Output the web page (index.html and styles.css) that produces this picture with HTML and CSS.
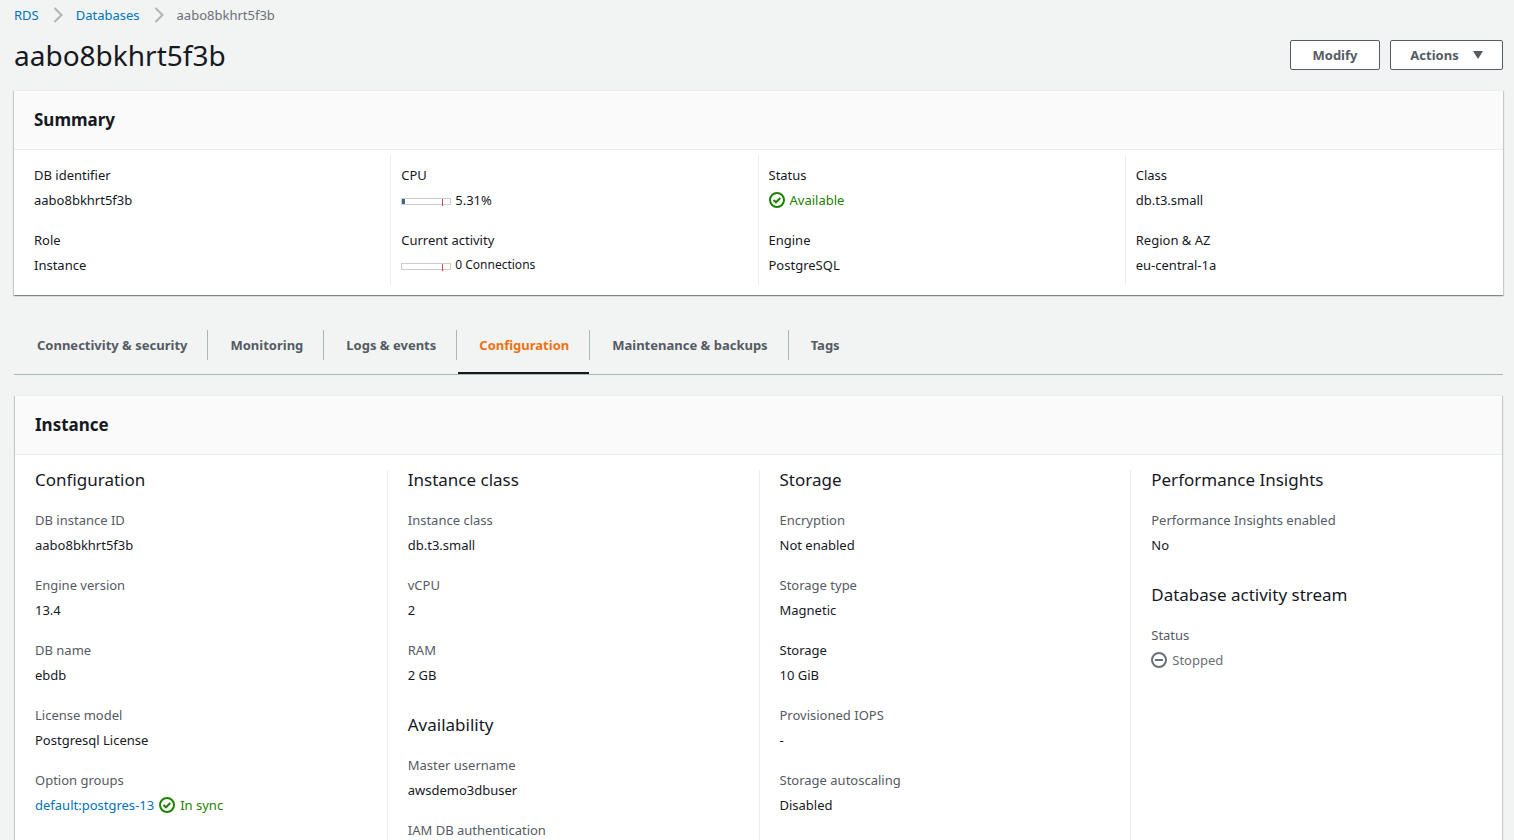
FILE: index.html
```html
<!DOCTYPE html>
<html lang="en">
<head>
<meta charset="utf-8">
<title>RDS - aabo8bkhrt5f3b</title>
<link rel="stylesheet" href="styles.css">
</head>
<body>
<svg class="sprite" aria-hidden="true">
  <symbol id="ok" viewBox="0 0 16 16"><circle cx="8" cy="8" r="7" fill="none" stroke="currentColor" stroke-width="2"/><path d="M4.500 8 7 10.300l4.300-4.300" fill="none" stroke="currentColor" stroke-width="2"/></symbol>
  <symbol id="stopped" viewBox="0 0 16 16"><circle cx="8" cy="8" r="7" fill="none" stroke="currentColor" stroke-width="2"/><path d="M4 8h8" fill="none" stroke="currentColor" stroke-width="2"/></symbol>
  <symbol id="chevron" viewBox="0 0 10 16"><path d="M1.500 1 8.500 8l-7 7" fill="none" stroke="currentColor" stroke-width="2"/></symbol>
</svg>
<main class="page">
  <nav class="breadcrumb" aria-label="Breadcrumb">
    <a href="#">RDS</a>
    <svg class="chevron"><use href="#chevron"/></svg>
    <a href="#">Databases</a>
    <svg class="chevron"><use href="#chevron"/></svg>
    <span class="muted">aabo8bkhrt5f3b</span>
  </nav>
  <header class="title-bar">
    <h1>aabo8bkhrt5f3b</h1>
    <div class="buttons">
      <button class="button" type="button">Modify</button>
      <button class="button button-menu" type="button">Actions <svg class="caret" viewBox="0 0 10 8"><path d="M0 0h10L5 8z" fill="currentColor"/></svg></button>
    </div>
  </header>

  <section class="panel">
    <h2>Summary</h2>
    <div class="summary">
      <dl>
        <div><dt>DB identifier</dt><dd>aabo8bkhrt5f3b</dd></div>
        <div><dt>Role</dt><dd>Instance</dd></div>
      </dl>
      <dl>
        <div><dt>CPU</dt><dd class="metric"><span class="gauge"><span class="gauge-fill"></span></span>5.31%</dd></div>
        <div><dt>Current activity</dt><dd class="metric metric-small"><span class="gauge"></span>0 Connections</dd></div>
      </dl>
      <dl>
        <div><dt>Status</dt><dd class="status ok"><svg class="icon"><use href="#ok"/></svg>Available</dd></div>
        <div><dt>Engine</dt><dd>PostgreSQL</dd></div>
      </dl>
      <dl>
        <div><dt>Class</dt><dd>db.t3.small</dd></div>
        <div><dt>Region &amp; AZ</dt><dd>eu-central-1a</dd></div>
      </dl>
    </div>
  </section>

  <nav class="tabs" aria-label="Database details">
    <a href="#"><span>Connectivity &amp; security</span></a>
    <a href="#"><span>Monitoring</span></a>
    <a href="#"><span>Logs &amp; events</span></a>
    <a href="#" class="active" aria-current="page"><span>Configuration</span></a>
    <a href="#"><span>Maintenance &amp; backups</span></a>
    <a href="#"><span>Tags</span></a>
  </nav>

  <section class="panel panel-inset">
    <h2>Instance</h2>
    <div class="details">
      <div class="column">
        <h3>Configuration</h3>
        <dl>
          <div><dt>DB instance ID</dt><dd>aabo8bkhrt5f3b</dd></div>
          <div><dt>Engine version</dt><dd>13.4</dd></div>
          <div><dt>DB name</dt><dd>ebdb</dd></div>
          <div><dt>License model</dt><dd>Postgresql License</dd></div>
          <div><dt>Option groups</dt><dd class="status ok"><a href="#">default:postgres-13</a><svg class="icon"><use href="#ok"/></svg>In sync</dd></div>
        </dl>
      </div>
      <div class="column">
        <h3>Instance class</h3>
        <dl>
          <div><dt>Instance class</dt><dd>db.t3.small</dd></div>
          <div><dt>vCPU</dt><dd>2</dd></div>
          <div><dt>RAM</dt><dd>2 GB</dd></div>
        </dl>
        <h3>Availability</h3>
        <dl>
          <div><dt>Master username</dt><dd>awsdemo3dbuser</dd></div>
          <div><dt>IAM DB authentication</dt></div>
        </dl>
      </div>
      <div class="column">
        <h3>Storage</h3>
        <dl>
          <div><dt>Encryption</dt><dd>Not enabled</dd></div>
          <div><dt>Storage type</dt><dd>Magnetic</dd></div>
          <div><dt class="strong">Storage</dt><dd>10 GiB</dd></div>
          <div><dt>Provisioned IOPS</dt><dd>-</dd></div>
          <div><dt>Storage autoscaling</dt><dd>Disabled</dd></div>
        </dl>
      </div>
      <div class="column">
        <h3>Performance Insights</h3>
        <dl>
          <div><dt>Performance Insights enabled</dt><dd>No</dd></div>
        </dl>
        <h3>Database activity stream</h3>
        <dl>
          <div><dt>Status</dt><dd class="status muted"><svg class="icon"><use href="#stopped"/></svg>Stopped</dd></div>
        </dl>
      </div>
    </div>
  </section>
</main>
</body>
</html>
```
FILE: styles.css
```css
* { box-sizing: border-box; }
html { height: 100%; }
body {
  margin: 0;
  height: 100%;
  overflow: hidden;
  background: #f2f3f3;
  color: #16191f;
  font: 13px/20px "Noto Sans", "Open Sans", sans-serif;
}
h1, h2, h3, dl, dd { margin: 0; }
a { color: #0073bb; text-decoration: none; }
.sprite { position: absolute; width: 0; height: 0; }
.muted { color: #687078; }
.ok { color: #1d8102; }

.page { padding: 5px 11px 0 14px; }
.breadcrumb { display: flex; align-items: center; }
.chevron { width: 10px; height: 16px; margin: 0 13px 0 14px; color: #aab7b8; }

.title-bar { display: flex; align-items: center; justify-content: space-between; height: 60px; }
h1 { font-size: 28px; line-height: 36px; font-weight: 400; }
.buttons { display: flex; gap: 10px; }
.button {
  display: flex;
  align-items: center;
  justify-content: center;
  min-width: 90px;
  height: 30px;
  padding: 0 18px;
  border: 1px solid #545b64;
  border-radius: 2px;
  background: #fff;
  color: #545b64;
  font: inherit;
  font-weight: 700;
}
.button-menu { min-width: 113px; gap: 14px; }
.caret { width: 10px; height: 8px; }

.panel {
  margin-top: 5px;
  background: #fff;
  border-top: 1px solid #eaeded;
  box-shadow: 0 1px 1px 0 rgba(0, 28, 36, 0.3), 1px 1px 1px 0 rgba(0, 28, 36, 0.15), -1px 1px 1px 0 rgba(0, 28, 36, 0.15);
}
.panel h2 {
  padding: 18px 20px;
  background: #fafafa;
  border-bottom: 1px solid #eaeded;
  font-size: 17px;
  line-height: 22px;
}
.summary { display: grid; grid-template-columns: repeat(4, 1fr); padding: 5px 10px 10px; }
.summary dl { border-right: 1px solid #eaeded; }
.summary dl:last-child { border-right: 0; }
.summary dl > div { padding: 10px; }
dd { margin-top: 5px; }
.status, .metric { display: flex; align-items: center; gap: 5px; }
.metric { gap: 4px; }
.icon { width: 16px; height: 16px; }
.gauge {
  position: relative;
  width: 50px;
  height: 7px;
  margin-top: 2px;
  border: 1px solid #ccc;
}
.gauge-fill { display: block; width: 3px; height: 100%; background: #3f6690; }
/* threshold mark, hanging just below the bar */
.gauge::after {
  content: "";
  position: absolute;
  top: 0;
  left: 40px;
  width: 1px;
  height: 7px;
  background: #d9434a;
}
.metric-small { font-size: 12px; }

.tabs { display: flex; gap: 2px; margin-top: 25px; padding: 10px 0 0 2px; border-bottom: 1px solid #95a5a6; border-color: #aab7b8; }
.tabs a {
  height: 44px;
  border-bottom: 2px solid transparent;
  color: #545b64;
  font-weight: 700;
}
.tabs span { display: block; padding: 5px 20px 5px 21px; box-shadow: 1px 0 #aab7b8; }
.tabs a:last-child span { box-shadow: none; }
.tabs .active { color: #ec7211; border-bottom-color: #16191f; }

.panel-inset { margin: 20px 1px 0; }
.details { display: grid; grid-template-columns: repeat(4, 1fr); padding: 15px 0 20px; }
.column { padding: 0 20px; border-left: 1px solid #eaeded; }
.column:first-child { border-left: 0; }
.column h3 { margin-bottom: 20px; font-size: 17px; line-height: 20px; font-weight: 400; }
.column dl + h3 { margin-top: 30px; }
.column dl { display: grid; gap: 20px; }
.column dt { color: #545b64; }
.column .strong { color: #16191f; }
```
